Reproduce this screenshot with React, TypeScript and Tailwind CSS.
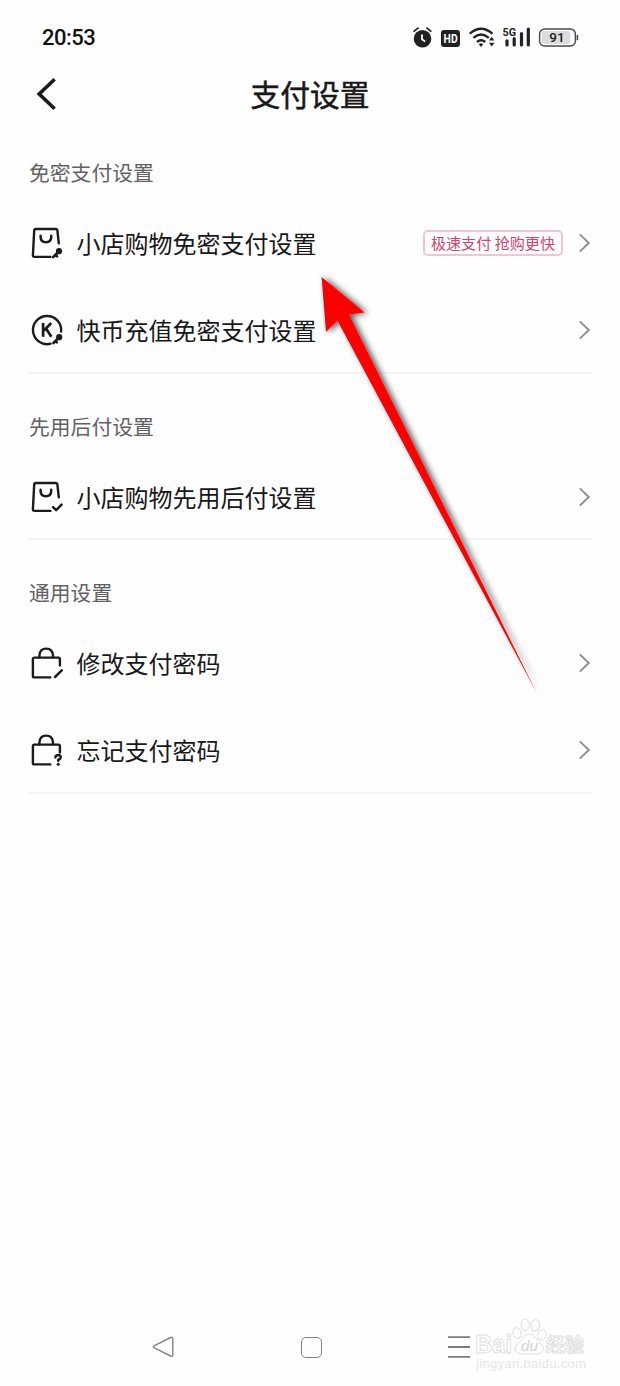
import React from 'react';

const stroke = {
  fill: 'none',
  stroke: '#1b1b1d',
  strokeWidth: 2.4,
  strokeLinecap: 'round' as const,
  strokeLinejoin: 'round' as const,
};

function BagShape() {
  return (
    <>
      <path d="M19.4 30.9H3.4Q1.8 30.9 1.9 29.3L3.2 4.6Q3.3 3 4.9 3H24.6Q26.2 3 26.4 4.6L27.8 17.4" />
      <path d="M9.6 9.8V11.4Q9.8 16.2 14.9 16.2Q20 16.2 20.2 11.4V9.8" />
    </>
  );
}

function KeyShape() {
  return (
    <>
      <circle cx="28" cy="25.2" r="3.1" fill="#1b1b1d" stroke="none" />
      <path d="M26.5 26.8L22.2 31M24.6 29L26 30.4" strokeWidth="2.6" />
    </>
  );
}

function LockBag() {
  return (
    <>
      <path d="M19.3 31.4H3.4Q1.9 31.4 1.9 29.9V13.1Q1.9 11.6 3.4 11.6H27.4Q28.9 11.6 28.9 13.1V19.4" />
      <path d="M8.4 11.2V9.6Q8.8 2.6 15.2 2.6Q21.6 2.6 22 9.6V11.2" />
    </>
  );
}

type IconKind = 'bagKey' | 'coinKey' | 'bagCheck' | 'lockEdit' | 'lockHelp';

function RowIcon({ kind }: { kind: IconKind }) {
  return (
    <svg className="ml-[2px] h-[34px] w-[34px] shrink-0" viewBox="0 0 34 34" {...stroke}>
      {kind === 'bagKey' && (
        <>
          <BagShape />
          <KeyShape />
        </>
      )}
      {kind === 'coinKey' && (
        <>
          <path d="M19.6 30.7A14.1 14.1 0 1 1 30.1 18.6" />
          <path d="M12.1 10V23.8M20.2 10L13 17.5M15 15.6L20.4 23.8" strokeWidth="2.7" strokeLinecap="butt" />
          <circle cx="28.2" cy="24.2" r="3.1" fill="#1b1b1d" stroke="none" />
          <path d="M26.6 25.8L22.4 30M24.6 28.2L25.8 29.4" strokeWidth="2.6" />
        </>
      )}
      {kind === 'bagCheck' && (
        <>
          <BagShape />
          <path d="M22.1 27.2L25.2 30.2L30.6 24.6" strokeWidth="2.4" />
        </>
      )}
      {kind === 'lockEdit' && (
        <>
          <LockBag />
          <path d="M24 31L30.8 24.4" strokeWidth="2.5" />
        </>
      )}
      {kind === 'lockHelp' && (
        <>
          <LockBag />
          <path d="M24.4 24.4Q24.6 22 27.2 22Q29.8 22.1 29.7 24.4Q29.6 26 27.2 26.8V27.8" strokeWidth="2.5" />
          <circle cx="27.2" cy="31.2" r="1.5" fill="#1b1b1d" stroke="none" />
        </>
      )}
    </svg>
  );
}

function Row({ kind, label, badge }: { kind: IconKind; label: string; badge?: string }) {
  return (
    <div className="flex h-[87px] items-center">
      <RowIcon kind={kind} />
      <span className="ml-[11.5px] text-[24px] leading-8 whitespace-nowrap text-[#18181a]">{label}</span>
      <span className="flex-1" />
      {badge && (
        <span className="mr-[15px] flex h-[26px] w-[140px] items-center justify-center rounded-[5px] border-2 border-[#f6c3d2] pb-[2px] text-[15.1px] leading-5 whitespace-nowrap text-[#d04470]">
          {badge}
        </span>
      )}
      <svg className="mr-[2px] h-[20px] w-[13px]" viewBox="0 0 13 20" fill="none" stroke="#909092" strokeWidth="2">
        <path d="M1.8 1.4L10.8 10L1.8 18.6" />
      </svg>
    </div>
  );
}

function Section({ title, children }: { title: string; children: React.ReactNode }) {
  return (
    <section>
      <h2 className="flex h-[79.5px] items-end pb-[12.5px] text-[20.8px] leading-[30px] text-[#626264]">{title}</h2>
      <div className="border-b-2 border-[#f3f3f4] [&>div:last-child]:-mb-[2px]">{children}</div>
    </section>
  );
}

function StatusBar() {
  return (
    <div className="flex h-[60px] items-start justify-between pt-[22px] pr-[40px] pl-[42px]">
      <span className="font-[Roboto] text-[22px] leading-8 font-medium tracking-[-0.5px] text-[#111]">20:53</span>
      <svg className="mt-[1px] h-[30px] w-[168px]" viewBox="0 0 168 30" fill="none">
        <circle cx="10.5" cy="15.8" r="8.8" fill="#222224" />
        <path d="M1.6 8.6L6.6 4.6M14.4 4.6L19.4 8.6" stroke="#222224" strokeWidth="1.8" />
        <path d="M10 11.6V16.2L13.2 18.6" stroke="#fff" strokeWidth="1.8" />
        <rect x="29" y="7" width="19" height="17" rx="3" fill="#222224" />
        <text x="31.6" y="19.8" fill="#fff" fontFamily="Roboto" fontWeight="700" fontSize="12" textLength="14" lengthAdjust="spacingAndGlyphs">HD</text>
        <g stroke="#222224" strokeWidth="2.4">
          <path d="M57.8 10.6Q69 0.8 80.4 10.6" />
          <path d="M61.4 14.8Q69 8.2 76.8 14.8" />
          <path d="M65 19Q69 15.4 73.2 19" />
        </g>
        <path d="M66.8 21.2Q69 19.4 71.2 21.2L69 24Z" fill="#222224" />
        <path d="M77 17.4L79.7 13.8L82.4 17.4ZM77 19.8L79.7 23.4L82.4 19.8Z" fill="#222224" />
        <text x="90.5" y="12.6" fill="#222224" fontFamily="Roboto" fontWeight="700" fontSize="11.5" textLength="13.5" lengthAdjust="spacingAndGlyphs">5G</text>
        <path d="M95 17.8V22M102.2 15.5V22M109.5 10.5V22M116.3 6V22" stroke="#222224" strokeWidth="3.2" strokeLinecap="round" />
        <rect x="127.6" y="6" width="35.8" height="17" rx="5" stroke="#48484a" strokeWidth="1.4" />
        <rect x="129.6" y="8" width="28.6" height="13" rx="3" fill="#dcdcdd" />
        <path d="M165.4 12V17.2" stroke="#48484a" strokeWidth="1.5" />
        <text x="145" y="19.4" textAnchor="middle" fill="#1c1c1e" fontFamily="Roboto" fontWeight="500" fontSize="13.5">91</text>
      </svg>
    </div>
  );
}

function Watermark() {
  return (
    <svg
      className="absolute top-[1314px] left-[472px] h-[60px] w-[118px]"
      viewBox="0 0 118 60"
      fill="#fff"
      stroke="#dedede"
      strokeWidth="1"
      fontFamily="'Liberation Sans', 'Noto Sans CJK SC', sans-serif"
    >
      <text x="3" y="39" fontSize="26" fontWeight="700" textLength="37" lengthAdjust="spacingAndGlyphs">Bai</text>
      <ellipse cx="45" cy="19" rx="4" ry="5.4" transform="rotate(-15 45 19)" />
      <ellipse cx="53.2" cy="11" rx="4.2" ry="5.8" />
      <ellipse cx="63.4" cy="11.4" rx="4.2" ry="5.8" transform="rotate(10 63.4 11.4)" />
      <ellipse cx="70" cy="21" rx="4" ry="5.2" transform="rotate(25 70 21)" />
      <path d="M57 20C63 20 65 27 69 30C74 34 71 40 64 40H51C42 40 41 34 46 30C50 27 51 20 57 20Z" />
      <text x="49" y="37" fontSize="15" fontStyle="italic" stroke="none" fill="#d4d4d4" textLength="17" lengthAdjust="spacingAndGlyphs">du</text>
      <text x="74" y="38" fontSize="19" fontWeight="700" textLength="38">经验</text>
      <text x="4" y="54" fontSize="13" textLength="110" fill="#e6e6e6" stroke="none">jingyan.baidu.com</text>
    </svg>
  );
}

function PointerArrow() {
  return (
    <svg className="pointer-events-none absolute top-[260px] left-[300px] h-[450px] w-[260px]" viewBox="300 260 260 450">
      <defs>
        <filter id="arrowShadow" x="-20%" y="-20%" width="140%" height="140%">
          <feDropShadow dx="3" dy="0.5" stdDeviation="3" floodColor="#000" floodOpacity="0.68" />
        </filter>
      </defs>
      <path
        d="M321.6 277L364.6 312.4L348.8 314.5L536.5 692.5L337.4 320.5L326 332Z"
        fill="#fe0000"
        filter="url(#arrowShadow)"
      />
    </svg>
  );
}

export default function App() {
  return (
    <div className="relative flex h-[1386px] w-[620px] flex-col overflow-hidden bg-[#fefefe] font-['Noto_Sans_CJK_SC',sans-serif]">
      <StatusBar />
      <header className="grid h-[60px] grid-cols-[1fr_auto_1fr] items-start pt-[11px]">
        <svg className="mt-[6px] ml-[36px] h-[34px] w-[22px]" viewBox="0 0 22 34" fill="none" stroke="#1b1b1d" strokeWidth="3.6">
          <path d="M18.6 2.2L3.2 17L18.6 31.8" />
        </svg>
        <h1 className="text-[29.8px] leading-[44px] font-normal text-[#18181a] [-webkit-text-stroke:0.5px_#18181a]">支付设置</h1>
      </header>
      <main className="flex-1 pr-[27px] pl-[29px]">
        <Section title="免密支付设置">
          <Row kind="bagKey" label="小店购物免密支付设置" badge="极速支付 抢购更快" />
          <Row kind="coinKey" label="快币充值免密支付设置" />
        </Section>
        <Section title="先用后付设置">
          <Row kind="bagCheck" label="小店购物先用后付设置" />
        </Section>
        <Section title="通用设置">
          <Row kind="lockEdit" label="修改支付密码" />
          <Row kind="lockHelp" label="忘记支付密码" />
        </Section>
      </main>
      <nav className="flex h-[78px] items-center justify-between pr-[150px] pl-[152px]">
        <svg className="h-[24px] w-[22px]" viewBox="0 0 22 24" fill="none" stroke="#858585" strokeWidth="1.4">
          <path d="M2 10.8L18.6 2.5Q20.8 1.7 20.8 4V19.6Q20.8 21.8 18.6 21L2 12.7Q0.6 11.8 2 10.8Z" />
        </svg>
        <span className="h-[21px] w-[21px] rounded-[5px] border-[1.5px] border-[#858585]" />
        <svg className="h-[22px] w-[22px]" viewBox="0 0 22 22" stroke="#7c7c7c" strokeWidth="1.8">
          <path d="M0 1.2H22M0 11H22M0 20.8H22" />
        </svg>
      </nav>
      <PointerArrow />
      <Watermark />
    </div>
  );
}
